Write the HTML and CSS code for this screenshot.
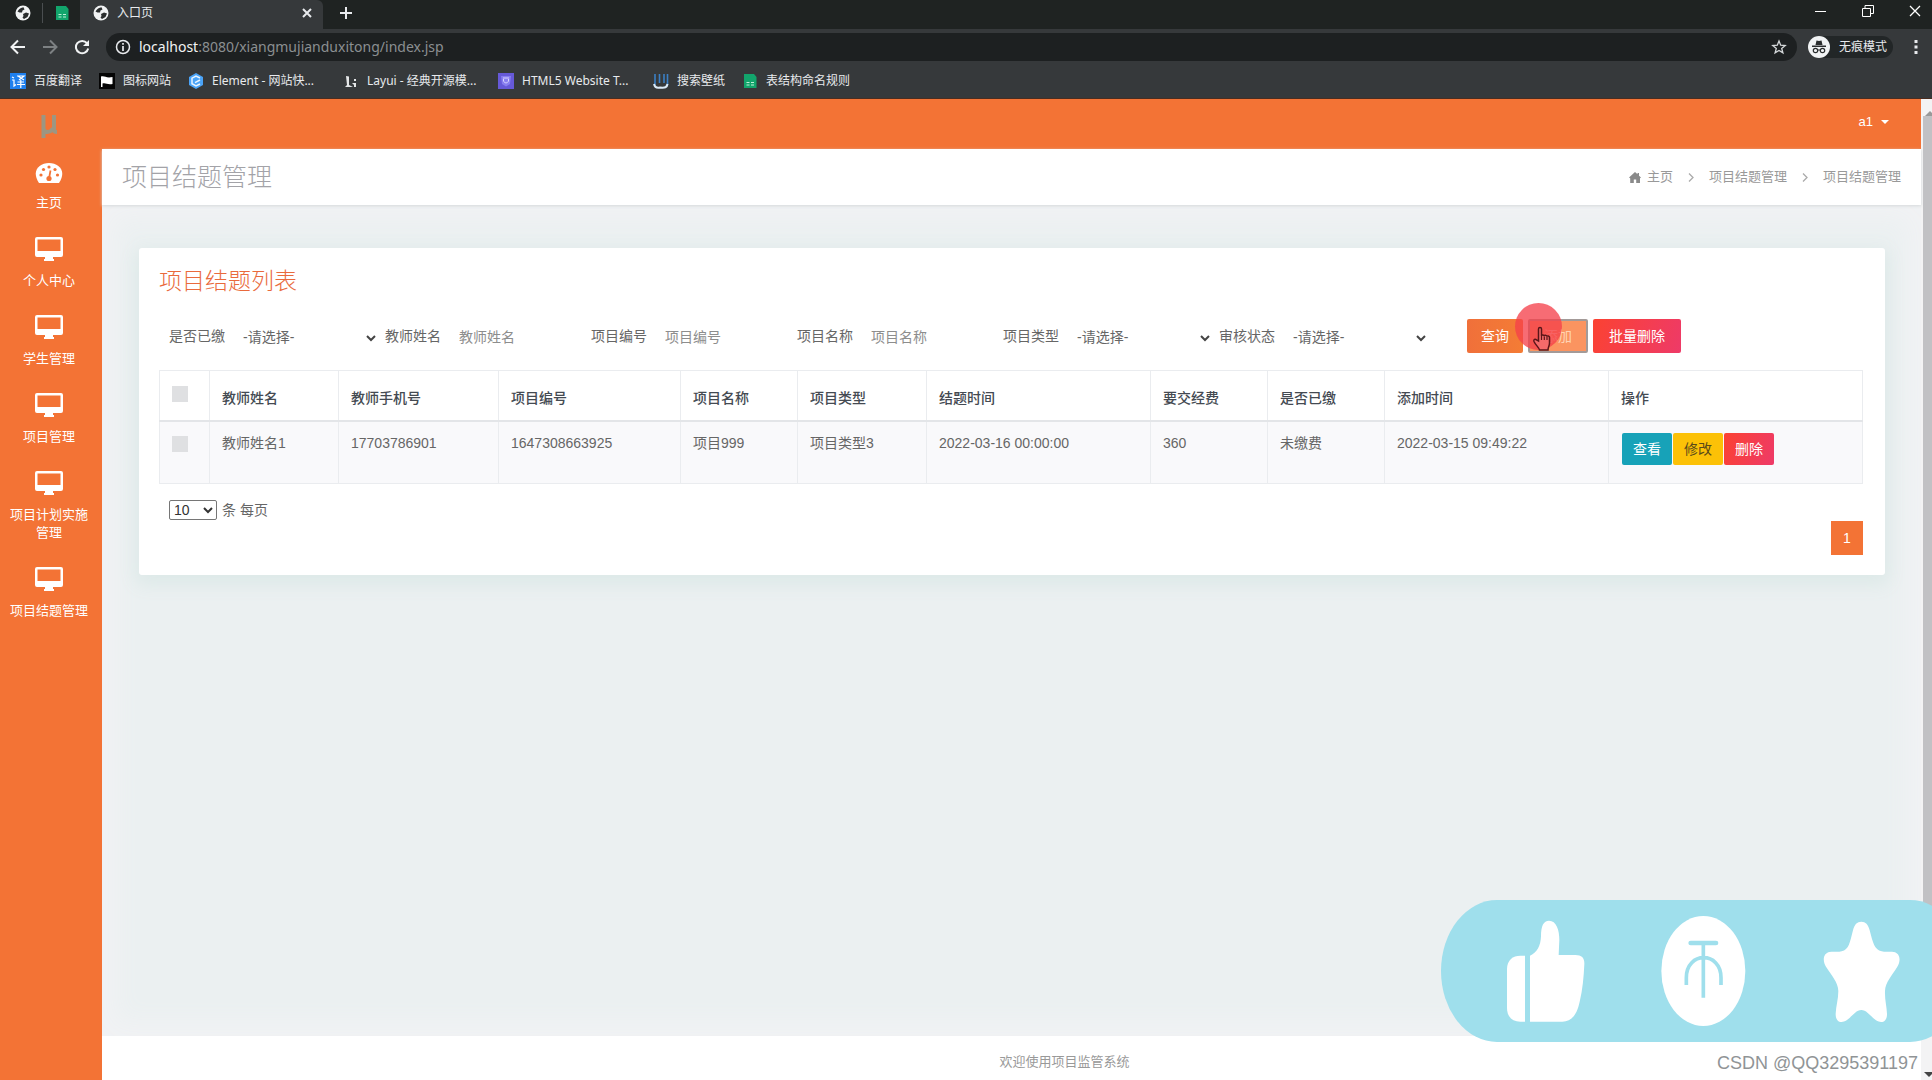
FILE: index.html
```html
<!DOCTYPE html>
<html lang="zh-CN">
<head>
<meta charset="utf-8">
<title>入口页</title>
<link rel="stylesheet" href="styles.css">
</head>
<body>
<svg class="defs" aria-hidden="true">
  <symbol id="globe" viewBox="0 0 16 16"><circle cx="8" cy="8" r="7.5" fill="#f1f3f4"/><path d="M2.5 6.5C4 4 6 2.5 8.500 2.200L9.500 4.500 7.500 5.500 7 7.500 4.500 7.500zM8 9l3-1.500 3 1-1.500 3.500-3.500 2-1.500-1.500 1-1.500z" fill="#2a2d2e"/></symbol>
  <symbol id="sheet" viewBox="0 0 16 16"><path d="M2 1h10l2.500 3v11H2z" fill="#12a56c"/><path d="M4.500 9.500h3M9 9.500h3M4.500 12h3M9 12h3" stroke="#bdf0d8"/></symbol>
  <symbol id="monitor" viewBox="0 0 28 24"><path fill-rule="evenodd" d="M2 0h24a2 2 0 0 1 2 2v16a2 2 0 0 1-2 2h-8v2h1v2H9v-2h1v-2H2a2 2 0 0 1-2-2V2a2 2 0 0 1 2-2zM2.500 2.500V14h23V2.500z" fill="currentColor"/></symbol>
</svg>

<header class="browser">
  <div class="tabs">
    <div class="pinned"><svg class="i16"><use href="#globe"/></svg><span class="split"></span><svg class="i16"><use href="#sheet"/></svg></div>
    <div class="tab"><svg class="i16"><use href="#globe"/></svg><span class="tab-title">入口页</span>
      <button class="bare" aria-label="关闭标签页"><svg width="10" height="10" viewBox="0 0 10 10"><path d="M1 1l8 8M9 1L1 9" stroke="#e8eaed" stroke-width="2"/></svg></button></div>
    <button class="bare plus" aria-label="新标签页"><svg width="12" height="12" viewBox="0 0 12 12"><path d="M6 0v12M0 6h12" stroke="#e8eaed" stroke-width="2"/></svg></button>
    <div class="window-buttons">
      <button class="bare" aria-label="最小化"><svg width="12" height="12" viewBox="0 0 12 12"><path d="M0 6.500h11" stroke="#fff"/></svg></button>
      <button class="bare" aria-label="还原"><svg width="12" height="12" viewBox="0 0 12 12"><path d="M.5 3.500h8v8h-8zM3 3.500V.5h8.500v8H8.500" fill="none" stroke="#fff"/></svg></button>
      <button class="bare" aria-label="关闭"><svg width="12" height="12" viewBox="0 0 12 12"><path d="M1 1l10 10M11 1L1 11" stroke="#fff" stroke-width="1.300"/></svg></button>
    </div>
  </div>
  <div class="toolbar">
    <button class="bare nav" aria-label="后退"><svg width="16" height="16" viewBox="0 0 16 16"><path d="M15 8H2M8 1.500L1.500 8 8 14.500" fill="none" stroke="#f1f3f4" stroke-width="2"/></svg></button>
    <button class="bare nav" aria-label="前进"><svg width="16" height="16" viewBox="0 0 16 16"><path d="M1 8h13M8 1.500L14.500 8 8 14.500" fill="none" stroke="#7d8183" stroke-width="2"/></svg></button>
    <button class="bare nav" aria-label="刷新"><svg width="16" height="16" viewBox="0 0 16 16"><path d="M13 4.200A6.200 6.200 0 1 0 14.200 9.500" fill="none" stroke="#f1f3f4" stroke-width="2"/><path d="M15 1v6H9z" fill="#f1f3f4"/></svg></button>
    <div class="omnibox">
      <svg width="16" height="16" viewBox="0 0 16 16"><circle cx="8" cy="8" r="6.500" fill="none" stroke="#e8eaed" stroke-width="1.500"/><path d="M8 7v5M8 4v1.800" stroke="#e8eaed" stroke-width="1.700"/></svg>
      <span class="url"><b>localhost</b>:8080/xiangmujianduxitong/index.jsp</span>
      <svg width="16" height="16" viewBox="0 0 16 16"><path d="M8 2l1.700 4.200 4.500.3-3.500 2.900 1.200 4.400L8 11.400l-3.900 2.400 1.200-4.400-3.500-2.900 4.500-.3z" fill="none" stroke="#d5d8da" stroke-width="1.300"/></svg>
    </div>
    <div class="incognito"><svg width="22" height="22" viewBox="0 0 22 22"><circle cx="11" cy="11" r="11" fill="#f1f3f4"/><path d="M7.500 9l1-4.500 2.500.6 2.500-.6 1 4.500zM4 9.500h14V11H4z" fill="#2a2d2e"/><circle cx="7.500" cy="14.500" r="2.200" fill="none" stroke="#2a2d2e" stroke-width="1.200"/><circle cx="14.500" cy="14.500" r="2.200" fill="none" stroke="#2a2d2e" stroke-width="1.200"/><path d="M9.500 14h3" stroke="#2a2d2e"/></svg><span>无痕模式</span></div>
    <button class="bare more" aria-label="菜单"><svg width="4" height="16" viewBox="0 0 4 16"><path d="M.5 1h3v3h-3zM.5 6.500h3v3h-3zM.5 12h3v3h-3z" fill="#e8eaed"/></svg></button>
  </div>
  <nav class="bookmarks">
    <a href="#"><svg class="i16" viewBox="0 0 16 16"><path d="M0 0h16v16H0z" fill="#1f80ee"/><path d="M2 4l2 1M2 7h2v6l2-1.500M7 3h7l-5 4M8 3l6 4M7.500 9h6.500M7 11.500h8M10.800 7v8" fill="none" stroke="#fff" stroke-width="1.200"/></svg><span>百度翻译</span></a>
    <a href="#"><svg class="i16" viewBox="0 0 16 16"><path d="M0 0h16v16H0z" fill="#050505"/><path d="M2 3.500c4-1 5 2 11.500.5v7C8 12 7 9.500 3.500 10.500V14H2z" fill="#fff"/></svg><span>图标网站</span></a>
    <a href="#" class="long"><svg class="i16" viewBox="0 0 16 16"><path d="M8 0l7 4v8l-7 4-7-4V4z" fill="#4aa3f7"/><path d="M12 5L8 3 4 5.200v5.500L8 13l4-2M12 7L7 9.700" fill="none" stroke="#e8f4ff" stroke-width="1.500"/></svg><span>Element - 网站快...</span></a>
    <a href="#" class="long"><svg class="i16" viewBox="0 0 16 16"><path d="M3 3l3 .5V12l4 2H2l2-2zM11 6h2v2h-2zM9 10h4v4h-2v-2z" fill="#e4e6e7"/></svg><span>Layui - 经典开源模...</span></a>
    <a href="#" class="long"><svg class="i16" viewBox="0 0 16 16"><path d="M0 0h16v16H0z" fill="#6659d8"/><path d="M3 3h10l-1 8-4 2.500L4 11z" fill="#877df0"/><path d="M5.500 6v2c1 2.500 4 2.500 5 0V6M5 5h6" fill="none" stroke="#d9d4ff"/></svg><span>HTML5 Website T...</span></a>
    <a href="#"><svg class="i16" viewBox="0 0 16 16"><path d="M2 1v11M6.500 1v9M11 1v9M14.500 1v11" stroke="#3b7fc4" stroke-width="1.600"/><path d="M1 11c1 4 4 4 6 3.500 5 .5 7 0 7.500-3.500" fill="none" stroke="#dcebf8" stroke-width="2"/></svg><span>搜索壁纸</span></a>
    <a href="#"><svg class="i16"><use href="#sheet"/></svg><span>表结构命名规则</span></a>
  </nav>
</header>

<div class="viewport">
  <aside class="sidebar">
    <div class="logo"><svg width="18" height="26" viewBox="0 0 18 26"><path d="M3.500 1v23M3.500 15c1 4 8 4 9.500-1M14 1v15c0 1 1 2 3 2" fill="none" stroke="#9c9682" stroke-width="4"/></svg></div>
    <nav class="menu">
      <a href="#"><svg width="28" height="24" viewBox="0 0 28 24"><path d="M4 24C-4 12 4 4 14 4s18 8 10 20z" fill="currentColor"/><g fill="#f37335"><circle cx="6" cy="16" r="1.600"/><circle cx="8.500" cy="10.500" r="1.600"/><circle cx="14" cy="8" r="1.600"/><circle cx="20" cy="10.500" r="1.600"/><circle cx="22.500" cy="16" r="1.600"/><circle cx="14" cy="19.500" r="2.600"/></g><path d="M14 19.500l1.500-8" stroke="#f37335" stroke-width="1.800"/></svg><span>主页</span></a>
      <a href="#"><svg width="28" height="24"><use href="#monitor"/></svg><span>个人中心</span></a>
      <a href="#"><svg width="28" height="24"><use href="#monitor"/></svg><span>学生管理</span></a>
      <a href="#"><svg width="28" height="24"><use href="#monitor"/></svg><span>项目管理</span></a>
      <a href="#"><svg width="28" height="24"><use href="#monitor"/></svg><span>项目计划实施管理</span></a>
      <a href="#"><svg width="28" height="24"><use href="#monitor"/></svg><span>项目结题管理</span></a>
    </nav>
  </aside>

  <main class="main">
    <div class="topbar"><button class="bare user">a1 <span class="caret"></span></button></div>
    <div class="titlebar">
      <h1>项目结题管理</h1>
      <nav class="crumbs">
        <a href="#"><svg width="12" height="11" viewBox="0 0 12 11"><path d="M6 0l2.500 2.300V1H10v2.700L12 5.500l-1 .8V11H7.200V7.500H4.800V11H1.200V6.300L0 5.500z" fill="#8a8a8a"/></svg>主页</a>
        <svg width="6" height="9" viewBox="0 0 6 9"><path d="M1 .5l4 4-4 4" fill="none" stroke="#aaa" stroke-width="1.300"/></svg>
        <a href="#">项目结题管理</a>
        <svg width="6" height="9" viewBox="0 0 6 9"><path d="M1 .5l4 4-4 4" fill="none" stroke="#aaa" stroke-width="1.300"/></svg>
        <span>项目结题管理</span>
      </nav>
    </div>

    <div class="content">
      <section class="card">
        <h2>项目结题列表</h2>
        <form class="filters">
          <div class="field pick"><label for="paid">是否已缴</label><select id="paid"><option>-请选择-</option></select></div>
          <div class="field"><label for="teacher">教师姓名</label><input id="teacher" type="text" placeholder="教师姓名"></div>
          <div class="field"><label for="code">项目编号</label><input id="code" type="text" placeholder="项目编号"></div>
          <div class="field"><label for="name">项目名称</label><input id="name" type="text" placeholder="项目名称"></div>
          <div class="field pick"><label for="type">项目类型</label><select id="type"><option>-请选择-</option></select></div>
          <div class="field pick"><label for="state">审核状态</label><select id="state"><option>-请选择-</option></select></div>
          <div class="actions">
            <button type="button" class="btn query">查询</button>
            <div class="pressed">
              <button type="button" class="btn add">添加</button>
              <span class="click"></span>
              <svg class="hand" width="20" height="26" viewBox="0 0 20 26"><path d="M6.500 15V3c0-2 3-2 3 0v7c0-1.500 2.800-1.500 2.800.3 0-1.500 2.700-1.300 2.700.5 0-1.300 2.500-1.200 2.500.8V17c0 3-1.500 4-1.500 7H7.500c0-2-4-5-5.500-8.500-.8-2 1.200-3 2.500-1.500z" fill="#f46a6a" stroke="#5a1518" stroke-width="1.500"/><path d="M9.500 10v4M12.300 10.500V14M15 11v3" stroke="#5a1518" stroke-width="1.200"/></svg>
            </div>
            <button type="button" class="btn danger">批量删除</button>
          </div>
        </form>

        <table>
          <colgroup><col class="c-check"><col class="c-teacher"><col class="c-phone"><col class="c-code"><col class="c-short"><col class="c-teacher"><col class="c-time"><col class="c-short"><col class="c-short"><col class="c-time"><col></colgroup>
          <thead><tr><th class="check"><input type="checkbox" aria-label="全选"></th><th>教师姓名</th><th>教师手机号</th><th>项目编号</th><th>项目名称</th><th>项目类型</th><th>结题时间</th><th>要交经费</th><th>是否已缴</th><th>添加时间</th><th>操作</th></tr></thead>
          <tbody><tr><td class="check"><input type="checkbox" aria-label="选择此行"></td><td>教师姓名1</td><td>17703786901</td><td>1647308663925</td><td>项目999</td><td>项目类型3</td><td>2022-03-16 00:00:00</td><td>360</td><td>未缴费</td><td>2022-03-15 09:49:22</td>
            <td><div class="row-actions"><button class="btn view">查看</button><button class="btn edit">修改</button><button class="btn danger">删除</button></div></td></tr></tbody>
        </table>

        <div class="page-size"><select id="size"><option>10</option></select><label for="size">条 每页</label></div>
        <div class="pager"><button class="bare current">1</button></div>
      </section>
    </div>

    <footer>欢迎使用项目监管系统</footer>
  </main>

  <div class="scrollbar"><span class="up"></span><span class="thumb"></span><span class="down"></span></div>
</div>

<svg class="sticker" width="525" height="142" viewBox="62 57 1575 426" aria-hidden="true">
  <rect x="62" y="57" width="1575" height="426" rx="168" ry="213" fill="#9fdfec"/>
  <g fill="#fff">
    <path d="M314 224v198h-14c-25 0-40-15-40-42V264c0-27 18-40 40-40z"/>
    <path d="M329 224c22-10 32-30 33-58 0-32 8-47 24-47 22 0 31 28 31 58l-2 45h50c20 0 28 9 27 28-2 40-5 75-14 112-9 42-26 60-52 60h-97z"/>
    <ellipse cx="849" cy="270" rx="126" ry="165"/>
    <path d="M1323 122c13 0 20 8 25 26 10 38 14 58 36 63 12 3 25 0 36 2 20 3 22 27 11 44-16 27-36 46-37 73-1 25 5 45 6 68 1 22-14 32-33 20-16-11-27-31-44-31s-28 20-44 31c-19 12-34 2-33-20 1-23 8-43 8-68-1-27-20-46-37-73-11-17-9-41 11-44 11-2 24 1 36-2 22-5 24-25 34-63 5-18 12-26 25-26z"/>
  </g>
  <path d="M849 190v160M798 312v-22c0-80 104-80 104 0v22" fill="none" stroke="#9fdfec" stroke-width="11"/>
  <path d="M811 186h76" stroke="#9fdfec" stroke-width="14" stroke-linecap="round"/>
</svg>
<div class="watermark">CSDN @QQ3295391197</div>
</body>
</html>
```
FILE: styles.css
```css
* { box-sizing: border-box; }
html { height: 100%; }
body {
  position: relative;
  display: flex;
  flex-direction: column;
  min-height: 100%;
  margin: 0;
  overflow: hidden;
  font: 14px/20px "Liberation Sans", "Noto Sans CJK SC", sans-serif;
  color: #666;
}
a { color: inherit; text-decoration: none; }
button, input, select { font: inherit; color: inherit; }
svg { flex: none; display: block; }
.defs { position: absolute; width: 0; height: 0; }
.i16 { width: 16px; height: 16px; }
.bare { display: flex; align-items: center; justify-content: center; padding: 0; border: 0; background: none; }

/* browser frame */
.browser { height: 99px; background: #36393b; color: #e8eaed; font: 12px/16px "Noto Sans", "Noto Sans CJK SC", sans-serif; border-bottom: 1px solid #4a2d20; }
.tabs { display: flex; height: 29px; padding-bottom: 4px; background: #1f2322; align-items: center; }
.pinned { display: flex; align-items: center; gap: 11px; width: 80px; padding-left: 15px; }
.split { width: 1px; height: 20px; background: #4a4e50; }
.tab { display: flex; align-items: center; width: 243px; height: 29px; margin-bottom: -4px; padding: 0 11px 4px 13px; background: #36393b; border-radius: 0 6px 0 0; }
.tab-title { flex: 1; margin-left: 8px; }
.pinned, .tab { flex: none; }
.plus { margin-left: 17px; }
.window-buttons { display: flex; gap: 35px; margin-left: auto; padding: 0 11px 4px 0; }
.toolbar { display: flex; align-items: center; height: 36px; padding-left: 10px; }
.nav { width: 16px; margin-right: 16px; }
.omnibox { display: flex; flex: 1; align-items: center; height: 28px; padding: 0 10px 0 9px; background: #1d2021; border-radius: 14px; }
.url { flex: 1; margin-left: 8px; font-size: 14px; color: #8b8f91; }
.url b { font-weight: 400; color: #f1f3f4; }
.incognito { display: flex; align-items: center; gap: 9px; margin-left: 11px; padding-right: 6px; background: #222627; border-radius: 11px; }
.more { width: 4px; margin: 0 14px 0 21px; }
.bookmarks { display: flex; align-items: center; gap: 17px; height: 32px; padding-left: 10px; }
.bookmarks a { display: flex; align-items: center; gap: 8px; }
.bookmarks .long span { min-width: 114px; }

/* application frame */
.viewport { display: flex; flex: 1; }
.sidebar { width: 102px; flex: none; background: #f37335; color: #fff; }
.logo { display: flex; justify-content: center; height: 60px; padding-top: 15px; padding-right: 4px; }
.menu { display: flex; flex-direction: column; gap: 25px; padding: 0 12px 0 8px; font-size: 13px; line-height: 18px; text-align: center; }
.menu a { display: flex; flex-direction: column; align-items: center; gap: 11px; }
.main { display: flex; flex: 1; flex-direction: column; min-width: 0; }
.topbar { display: flex; justify-content: flex-end; height: 50px; padding: 0 32px 4px 0; background: #f37335; }
.user { gap: 8px; color: #fff; font-size: 13px; }
.caret { border: 4px solid transparent; border-top-color: #fff; border-bottom: 0; }
.titlebar { display: flex; align-items: center; justify-content: space-between; height: 56px; padding: 0 20px; background: #fff; box-shadow: 0 1px 3px #d5d8da; z-index: 1; }
h1 { margin: 0; font-size: 25px; line-height: 32px; font-weight: 300; color: #a3a3a8; }
.crumbs { display: flex; align-items: center; gap: 15px; font-size: 13px; color: #999; }
.crumbs a { display: flex; align-items: center; gap: 6px; }
.content { flex: 1; padding: 43px 36px 0 37px; background: #ebf0f1; box-shadow: inset 0 0 24px 14px #f1f2f4; }

/* list card */
.card { padding: 16px 22px 20px 20px; background: #fff; box-shadow: 0 6px 18px 4px #dde9e8; border-radius: 3px; }
h2 { margin: 0; font-size: 23px; line-height: 34px; font-weight: 300; color: #e96a3c; }
.filters { display: flex; flex-wrap: wrap; align-items: center; min-height: 34px; margin: 21px 0 17px 10px; }
.field { display: flex; align-items: center; gap: 6px; width: 206px; }
.field.pick { width: 216px; }
.field label { flex: none; }
.field input, .field select { flex: 1; min-width: 0; height: 32px; padding: 2px 12px 0; border: 0; background: transparent; appearance: none; }
.field input::placeholder { color: #8d8d8d; }
.field select { background: url("data:image/svg+xml,%3Csvg xmlns='http://www.w3.org/2000/svg' width='10' height='7'%3E%3Cpath d='M1 1l4 4 4-4' fill='none' stroke='%23444' stroke-width='2'/%3E%3C/svg%3E") no-repeat right 9px top 15px; }
.actions { display: flex; gap: 5px; margin-left: 32px; }
.btn { height: 34px; padding: 0 12px; border: 0; border-radius: 2px; color: #fff; line-height: 20px; }
.query { padding: 0 14px; background: linear-gradient(90deg, #f0703a, #f47c35); }
.pressed { position: relative; }
.add { padding: 0 14px; border: 2px solid #a39a98; background: #fb9460; color: #ffd3b4; }
.click { position: absolute; left: -13px; top: -16px; width: 47px; height: 47px; border-radius: 50%; background: #f5404ac4; }
.hand { position: absolute; left: 4px; top: 7px; }
.danger { padding: 0 16px; background: linear-gradient(110deg, #fb4232, #ee3a68); }

table { width: 100%; table-layout: fixed; border-collapse: collapse; }
.c-check { width: 50px; }
.c-teacher { width: 129px; }
.c-phone { width: 160px; }
.c-code { width: 182px; }
.c-short { width: 117px; }
.c-time { width: 224px; }
th, td { padding: 12px; border: 1px solid #eaecef; text-align: left; white-space: nowrap; }
th { height: 50px; border-bottom: 2px solid #e3e5e8; color: #444a52; font-weight: 500; vertical-align: bottom; }
td { height: 63px; padding-top: 11px; background: #f9f9fb; vertical-align: top; }
.check { vertical-align: top; }
.check input { display: block; width: 16px; height: 16px; margin: 3px 0 0; appearance: none; background: #dfe0e2; }
.row-actions { display: flex; gap: 1px; padding-left: 1px; }
.row-actions .btn { height: 32px; padding: 0 11px; }
.view { background: #17a2b8; }
.btn.edit { background: #fcc107; color: #5a4a1a; }

.page-size { display: flex; align-items: center; gap: 5px; margin: 16px 0 0 10px; }
.page-size select { width: 48px; height: 20px; padding: 0; border: 1px solid #767676; border-radius: 2px; background: #fff; color: #333; }
.pager { display: flex; justify-content: flex-end; margin-top: 1px; }
.current { width: 32px; height: 34px; background: #f37335; color: #fff; }

footer { height: 44px; padding: 16px 0 0 106px; background: #fff; text-align: center; font-size: 13px; color: #999; }

.scrollbar { display: flex; flex-direction: column; width: 11px; flex: none; padding-left: 2px; background: #f3f3f4; overflow: hidden; }
.scrollbar .up { height: 17px; width: 0; margin-left: 2px; border: 5px solid transparent; border-top-width: 7px; border-bottom-color: #999; }
.scrollbar .thumb { height: 83%; background: #c1c1c4; }
.scrollbar .down { margin: auto 0 3px 1px; width: 0; border: 5px solid transparent; border-top-color: #444; border-bottom: 0; }

/* overlays */
.sticker { position: absolute; right: -34px; bottom: 38px; z-index: 2; }
.watermark { position: absolute; right: 14px; bottom: 7px; z-index: 3; font-size: 18px; color: #909496; text-shadow: 1px 1px 0 #fff; }
```
